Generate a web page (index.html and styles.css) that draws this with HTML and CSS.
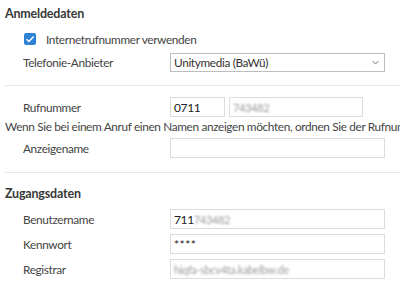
FILE: index.html
```html
<!DOCTYPE html>
<html lang="de">
<head>
    <meta charset="UTF-8">
    <title>Telefonnummer</title>
    <link rel="stylesheet" href="styles.css">
</head>
<body>
<div class="page">
    <h2 class="title">Anmeldedaten</h2>
    <label class="check-row">
        <span class="check">
            <svg width="10" height="10" viewBox="0 0 10 10"><path d="M1.5 5.2 L4 7.5 L8.6 2.6" fill="none" stroke="#fff" stroke-width="1.5"/></svg>
        </span>
        Internetrufnummer verwenden
    </label>
    <div class="row">
        <span class="label">Telefonie-Anbieter</span>
        <div class="select">
            <span>Unitymedia (BaWü)</span>
            <svg width="7" height="5" viewBox="0 0 7 5"><path d="M0.5 1 L3.5 4 L6.5 1" fill="none" stroke="#777" stroke-width="1"/></svg>
        </div>
    </div>

    <div class="divider"></div>

    <div class="row">
        <span class="label">Rufnummer</span>
        <div class="field short">0711</div>
        <div class="field mid"><span class="blur">743482</span></div>
    </div>
    <p class="hint">Wenn Sie bei einem Anruf einen Namen anzeigen möchten, ordnen Sie der Rufnummer einen Namen zu.</p>
    <div class="row after-hint">
        <span class="label">Anzeigename</span>
        <div class="field wide"></div>
    </div>

    <div class="divider second"></div>

    <h2 class="title">Zugangsdaten</h2>
    <div class="row tight first">
        <span class="label">Benutzername</span>
        <div class="field wide">711<span class="blur">743482</span></div>
    </div>
    <div class="row tight">
        <span class="label">Kennwort</span>
        <div class="field wide dots">****</div>
    </div>
    <div class="row tight">
        <span class="label">Registrar</span>
        <div class="field wide"><span class="blur">hiqfa-sbcv4ta.kabelbw.de</span></div>
    </div>
</div>
</body>
</html>
```

FILE: styles.css
```css
* {
    margin: 0;
    padding: 0;
    box-sizing: border-box;
}

html, body {
    width: 400px;
    height: 288px;
    overflow: hidden;
    background: #fff;
}

body {
    font-family: "Lato", "Noto Sans", sans-serif;
    font-size: 11.8px;
    letter-spacing: -0.35px;
    color: #444;
}

.page {
    padding: 4px 0 0 5px;
    overflow: hidden;
}

.title {
    font-size: 12.5px;
    font-weight: bold;
    color: #383838;
    line-height: 20px;
    letter-spacing: -0.2px;
}

.check-row {
    display: flex;
    align-items: center;
    height: 20px;
    margin-top: 5px;
    padding-left: 19px;
}

.check {
    width: 12px;
    height: 12px;
    border-radius: 2px;
    background: #2d82d6;
    display: flex;
    align-items: center;
    justify-content: center;
    margin-right: 10px;
}

.row {
    display: flex;
    align-items: center;
    height: 20px;
    padding-left: 18px;
    margin-top: 3px;
}

.row.after-hint {
    margin-top: 1px;
}

.row.tight {
    margin-top: 5px;
}

.row.tight.first {
    margin-top: 5px;
}

.label {
    width: 147px;
    flex: none;
}

.select {
    width: 215px;
    height: 19px;
    border: 1px solid #bdbdbd;
    display: flex;
    align-items: center;
    justify-content: space-between;
    padding: 0 5px 0 3px;
    color: #333;
}

.divider {
    height: 1px;
    background: #e8e8e8;
    margin: 13px 0 11px;
}

.divider.second {
    margin: 14px 0 11px;
}

.field {
    height: 20px;
    border: 1px solid #dcdcdc;
    padding: 0 3px;
    display: flex;
    align-items: center;
    font-size: 12px;
    color: #222;
    white-space: nowrap;
    overflow: hidden;
}

.field.short {
    width: 55px;
    margin-right: 4px;
}

.field.mid {
    width: 134px;
}

.field.wide {
    width: 215px;
}

.field.dots {
    letter-spacing: 0.5px;
}

.blur {
    display: inline-block;
    color: #9a9a9a;
    filter: blur(0.8px);
    font-size: 11px;
}

.hint {
    white-space: nowrap;
    line-height: 20px;
}
```
